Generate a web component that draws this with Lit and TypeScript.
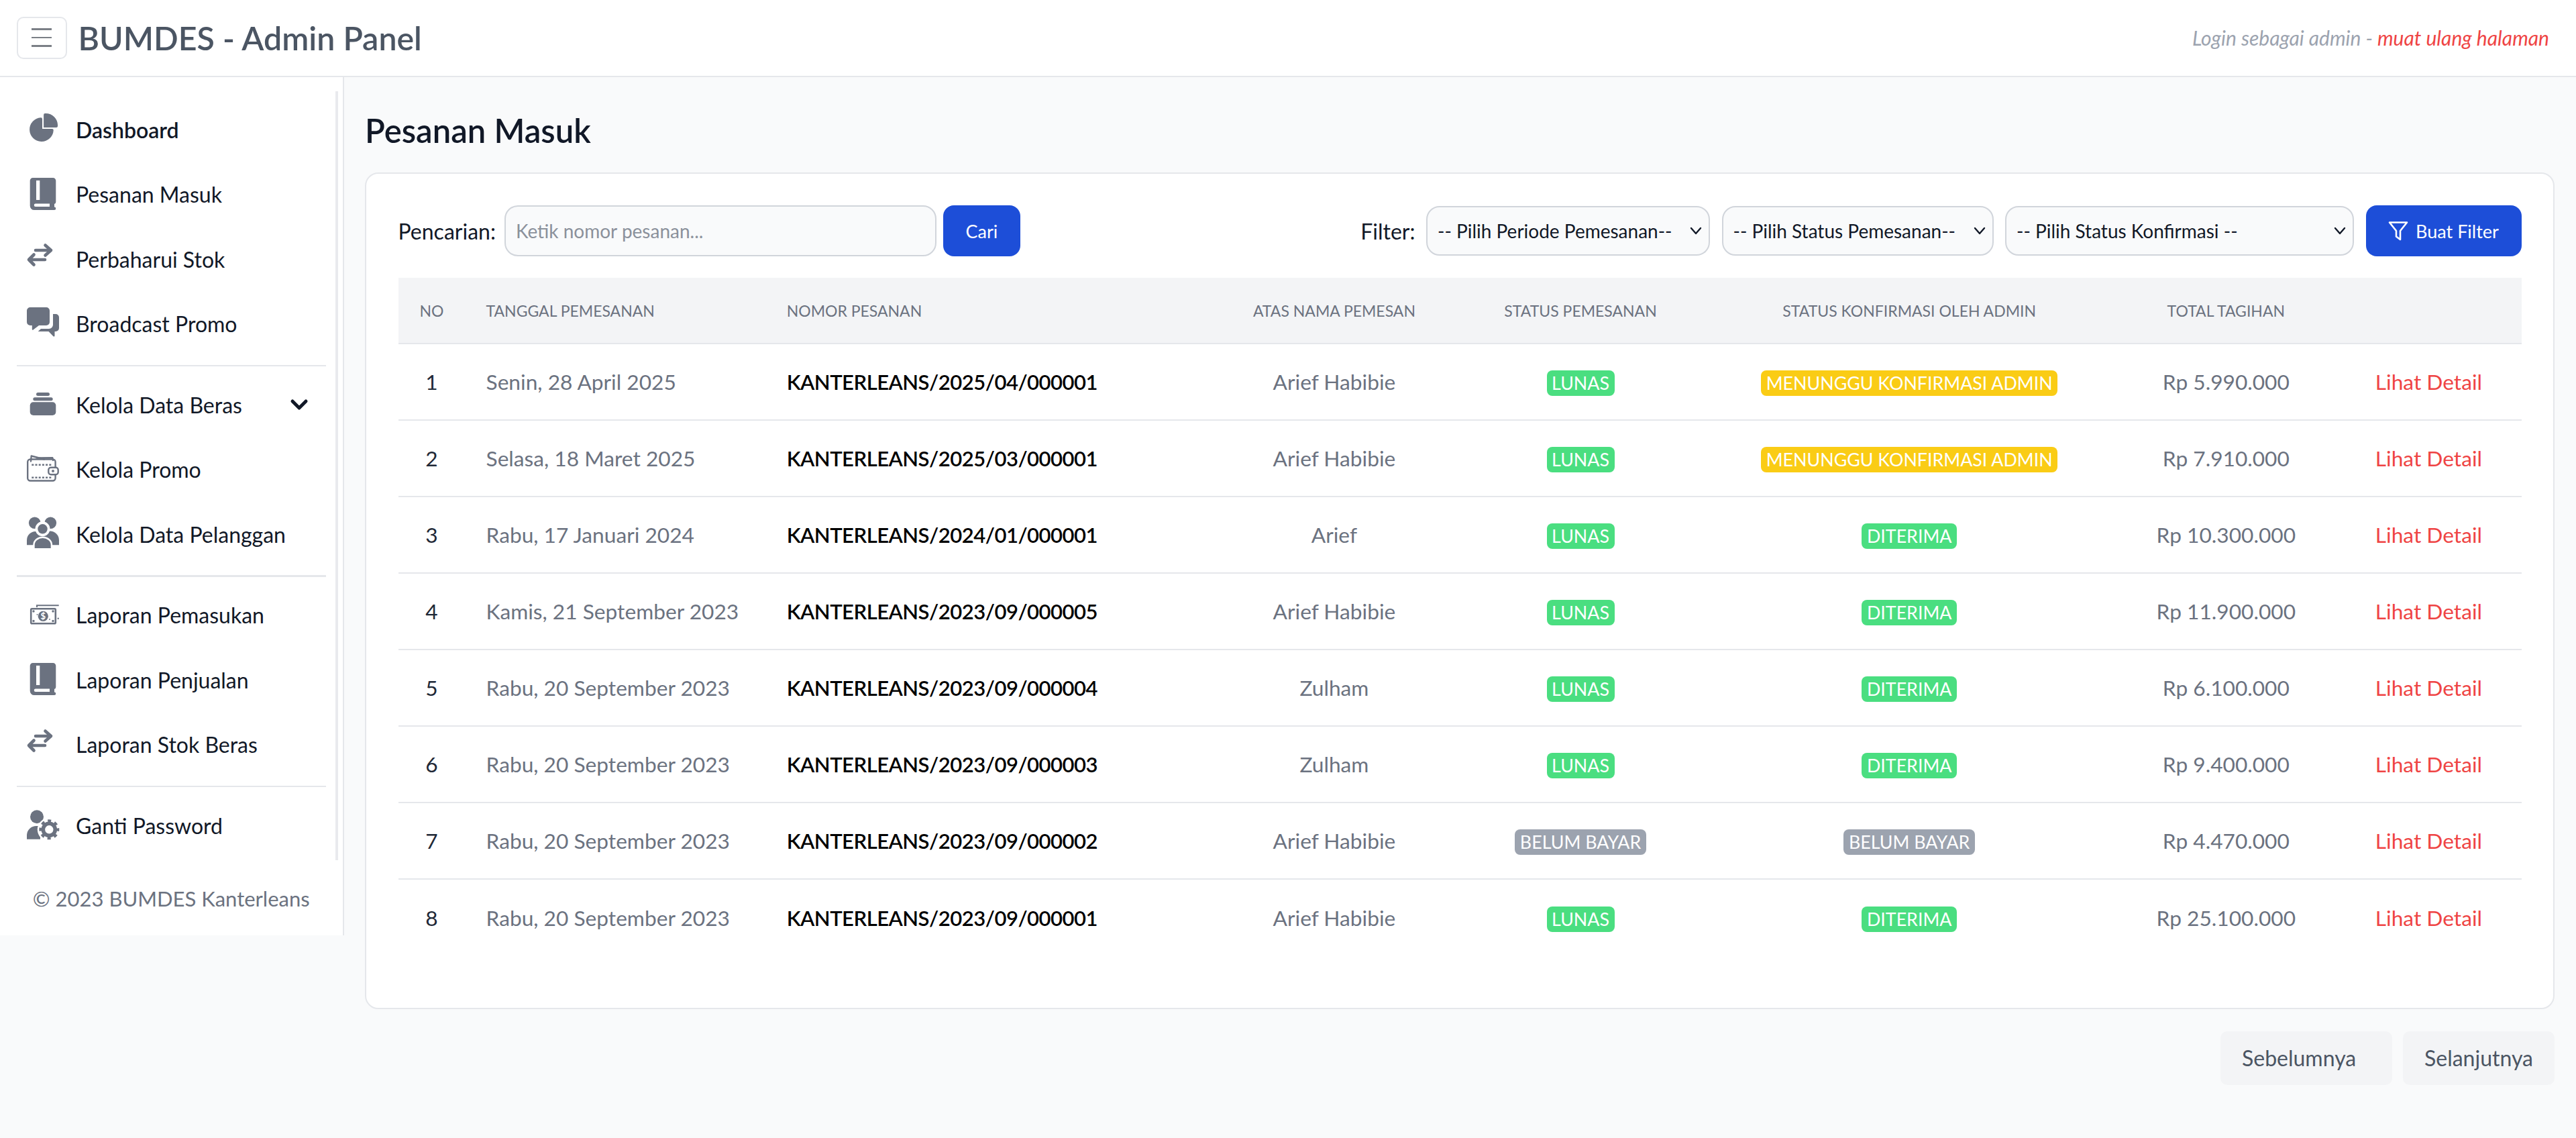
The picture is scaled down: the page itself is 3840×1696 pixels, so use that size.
import { LitElement, html, css } from 'lit'
import { customElement } from 'lit/decorators.js'

const arrows = html`<svg class="ico" viewBox="0 0 60 60" fill="none" stroke="currentColor" stroke-width="4.6" stroke-linecap="round" stroke-linejoin="round"><path d="M19 17H42M33.5 9.5L42 17L33.5 24.5"/><path d="M33 31H9M16.5 23.5L9 31L16.5 38.5"/></svg>`
const book = html`<svg class="ico" viewBox="0 0 60 60" fill="currentColor" fill-rule="evenodd"><path d="M15 5H45a4.3 4.3 0 0 1 4.3 4.3V41a3 3 0 0 1-2.3 2.9V48.5a2.2 2.2 0 0 1 0 4.5H17a6.3 6.3 0 0 1-6.3-6.3V9.3A4.3 4.3 0 0 1 15 5ZM20 9v29h5.3V9ZM19 43.5a2.2 2.2 0 0 0 0 4.5H40V43.5Z"/></svg>`

const icons = {
  pie: html`<svg class="ico" viewBox="0 0 60 60" fill="currentColor"><g transform="translate(8 6) scale(2.1)"><path d="M16.975 11H10V4.025a1 1 0 0 0-1.066-.998 8.5 8.5 0 1 0 9.039 9.039.999.999 0 0 0-1-1.066h.002Z"/><path d="M12.5 0c-.157 0-.311.01-.565.027A1 1 0 0 0 11 1.02V10h8.975a1 1 0 0 0 1-.935c.013-.188.028-.374.028-.565A8.51 8.51 0 0 0 12.5 0Z"/></g></svg>`,
  book,
  arrows,
  chat: html`<svg class="ico" viewBox="0 0 60 60" fill="currentColor"><path d="M11 5H35a5 5 0 0 1 5 5V27a5 5 0 0 1-5 5H24L15.5 38.5a1 1 0 0 1-1.7-.8V32H11a5 5 0 0 1-5-5V10a5 5 0 0 1 5-5Z"/><path d="M45 15h4a5 5 0 0 1 5 5v16a5 5 0 0 1-5 5h-1.5v6.5a1.2 1.2 0 0 1-2 .8L38.5 41H22.7L27 37H39a6 6 0 0 0 6-6Z"/></svg>`,
  stack: html`<svg class="ico" viewBox="0 0 60 60" fill="currentColor"><rect x="20" y="12" width="20" height="5" rx="2.5"/><rect x="15.3" y="19.3" width="29.4" height="5" rx="2.5"/><rect x="10.7" y="26.3" width="38.6" height="19.7" rx="5"/></svg>`,
  wallet: html`<svg class="ico" viewBox="0 0 60 60" fill="none" stroke="currentColor" stroke-width="2.4" stroke-linejoin="round" stroke-linecap="round"><path d="M12 17.5L12.7 9.5L32 14.5"/><path d="M21 12.5L44.3 12.3L45 16"/><rect x="7.2" y="14.5" width="41.4" height="32" rx="4"/><path d="M13.3 22.7H42.7M13.3 41.7H42.7" stroke-dasharray="3 2.2" stroke-linecap="butt"/><rect x="38.3" y="26.7" width="14.4" height="10.6" rx="3.5" fill="#fff"/><circle cx="45" cy="32" r=".8" fill="currentColor"/></svg>`,
  people: html`<svg class="ico" viewBox="0 0 60 60" fill="currentColor"><circle cx="17.7" cy="13.3" r="8.8"/><circle cx="41.3" cy="13.3" r="8.8"/><path d="M6 46.3V39a13 13 0 0 1 26 0v7.3Z"/><path d="M27 46.3V39a13 13 0 0 1 27 0v7.3Z"/><circle cx="29.5" cy="22.3" r="11" fill="#fff"/><path d="M17.7 51V46a12 10 0 0 1 24 0v5Z" fill="#fff" stroke="#fff" stroke-width="5"/><circle cx="29.5" cy="22.3" r="7.2"/><path d="M17.7 51V46a12 10 0 0 1 24 0v5Z"/></svg>`,
  money: html`<svg class="ico" viewBox="0 0 60 60" fill="currentColor"><path d="M21 18V15.2H53.7" fill="none" stroke="currentColor" stroke-width="2"/><rect x="12.2" y="20.2" width="36.6" height="22" rx="1.5" fill="none" stroke="currentColor" stroke-width="2.6"/><circle cx="16" cy="24" r="1.7"/><circle cx="45" cy="24" r="1.7"/><circle cx="16" cy="38.5" r="1.7"/><circle cx="45" cy="38.5" r="1.7"/><circle cx="21.5" cy="29" r=".9"/><circle cx="40" cy="36" r=".9"/><circle cx="52.7" cy="34.7" r="1.2"/><circle cx="30.3" cy="31.3" r="7.6"/><text x="30.3" y="36" text-anchor="middle" font-size="13" font-weight="700" fill="#fff">$</text></svg>`,
  usercog: html`<svg class="ico" viewBox="0 0 60 60" fill="currentColor"><circle cx="21" cy="17.3" r="10"/><path d="M6 50.7V44a14 14 0 0 1 14-13h6v19.7Z"/><circle cx="39.3" cy="36.3" r="17.5" fill="#fff"/><circle cx="39.3" cy="36.3" r="9" fill="none" stroke="currentColor" stroke-width="5.6"/><circle cx="39.3" cy="36.3" r="13" fill="none" stroke="currentColor" stroke-width="4" stroke-dasharray="5 5.21" stroke-dashoffset="2.5"/></svg>`,
}

type Badge = 'lunas' | 'wait' | 'ok' | 'unpaid'
const badges: Record<Badge, { text: string; cls: string }> = {
  lunas: { text: 'LUNAS', cls: 'green' },
  ok: { text: 'DITERIMA', cls: 'green' },
  wait: { text: 'MENUNGGU KONFIRMASI ADMIN', cls: 'yellow' },
  unpaid: { text: 'BELUM BAYAR', cls: 'grey' },
}

const rows: [string, string, string, Badge, Badge, string][] = [
  ['Senin, 28 April 2025', 'KANTERLEANS/2025/04/000001', 'Arief Habibie', 'lunas', 'wait', 'Rp 5.990.000'],
  ['Selasa, 18 Maret 2025', 'KANTERLEANS/2025/03/000001', 'Arief Habibie', 'lunas', 'wait', 'Rp 7.910.000'],
  ['Rabu, 17 Januari 2024', 'KANTERLEANS/2024/01/000001', 'Arief', 'lunas', 'ok', 'Rp 10.300.000'],
  ['Kamis, 21 September 2023', 'KANTERLEANS/2023/09/000005', 'Arief Habibie', 'lunas', 'ok', 'Rp 11.900.000'],
  ['Rabu, 20 September 2023', 'KANTERLEANS/2023/09/000004', 'Zulham', 'lunas', 'ok', 'Rp 6.100.000'],
  ['Rabu, 20 September 2023', 'KANTERLEANS/2023/09/000003', 'Zulham', 'lunas', 'ok', 'Rp 9.400.000'],
  ['Rabu, 20 September 2023', 'KANTERLEANS/2023/09/000002', 'Arief Habibie', 'unpaid', 'unpaid', 'Rp 4.470.000'],
  ['Rabu, 20 September 2023', 'KANTERLEANS/2023/09/000001', 'Arief Habibie', 'lunas', 'ok', 'Rp 25.100.000'],
]

const menu = [
  [
    { label: 'Dashboard', icon: icons.pie, active: true },
    { label: 'Pesanan Masuk', icon: icons.book },
    { label: 'Perbaharui Stok', icon: icons.arrows },
    { label: 'Broadcast Promo', icon: icons.chat },
  ],
  [
    { label: 'Kelola Data Beras', icon: icons.stack, more: true },
    { label: 'Kelola Promo', icon: icons.wallet },
    { label: 'Kelola Data Pelanggan', icon: icons.people },
  ],
  [
    { label: 'Laporan Pemasukan', icon: icons.money },
    { label: 'Laporan Penjualan', icon: icons.book },
    { label: 'Laporan Stok Beras', icon: icons.arrows },
  ],
  [{ label: 'Ganti Password', icon: icons.usercog }],
]

@customElement('app-root')
export class AppRoot extends LitElement {
  static styles = css`
    :host {
      display: block;
      min-height: 1696px;
      background: #f9fafb;
      font-family: Lato, 'Liberation Sans', sans-serif;
      font-size: 32px;
      color: #111827;
    }
    .top {
      height: 115px;
      box-sizing: border-box;
      background: #fff;
      border-bottom: 2.5px solid #e5e7eb;
      display: flex;
      align-items: center;
      padding: 0 40px 0 24.5px;
    }
    .burger {
      width: 75px;
      height: 63px;
      box-sizing: border-box;
      border: 2.5px solid #e5e7eb;
      border-radius: 10px;
      display: flex;
      flex-direction: column;
      justify-content: center;
      align-items: center;
      gap: 10px;
      margin-top: -1px;
    }
    .burger i {
      display: block;
      width: 30px;
      height: 2.5px;
      background: #7b7f86;
    }
    .brand {
      margin: -2px 0 0 17px;
      font-size: 48.3px;
      font-weight: 600;
      color: #4b5563;
    }
    .who {
      margin: -2px 0 0 auto;
      font-size: 30px;
      font-style: italic;
      color: #9ca3af;
    }
    .who a {
      color: #ef4444;
    }
    .page {
      display: flex;
      align-items: flex-start;
    }
    .side {
      width: 512.5px;
      flex: none;
      box-sizing: border-box;
      background: #fff;
      border-right: 2.5px solid #e5e7eb;
      padding-top: 21px;
      height: 1279px;
    }
    .menu {
      width: 504px;
      box-sizing: border-box;
      height: 1146px;
      border-right: 4px solid #e9eaee;
      padding: 9px 14px 0 24.5px;
    }
    .item {
      height: 96.5px;
      display: flex;
      align-items: center;
      gap: 19px;
      padding-left: 9.5px;
      color: #111827;
    }
    .item.active {
      font-weight: 600;
    }
    .ico {
      width: 60px;
      height: 60px;
      flex: none;
      color: #6b7280;
    }
    .item .chev {
      width: 28px;
      height: 18px;
      margin: 0 26px 0 auto;
      color: #111827;
    }
    hr {
      margin: 12.5px 0 9px;
      border: 0;
      height: 2.5px;
      background: #e5e7eb;
    }
    .copy {
      margin-top: 38px;
      text-align: center;
      font-size: 31px;
      color: #6b7280;
    }
    main {
      flex: 1;
      min-width: 0;
      padding: 44px 32px 0 31.5px;
    }
    h1 {
      margin: 0 0 28px;
      font-size: 49px;
      line-height: 70px;
      font-weight: 600;
    }
    .card {
      background: #fff;
      border: 2.5px solid #e5e7eb;
      border-radius: 20px;
      padding: 47px 47.5px 77.5px;
    }
    .tools {
      display: flex;
      align-items: center;
      height: 76px;
      margin-bottom: 32px;
    }
    .tools label {
      margin-right: 13px;
    }
    .search {
      width: 644px;
      height: 76px;
      box-sizing: border-box;
      border: 2.5px solid #d1d5db;
      border-radius: 20px;
      background: #f9fafb;
      padding: 0 15px;
      font: inherit;
      font-size: 28px;
      color: #111827;
    }
    .search::placeholder {
      color: #8b919b;
    }
    .btn {
      height: 76px;
      box-sizing: border-box;
      border: 0;
      border-radius: 16px;
      background: #1d4ed8;
      color: #fff;
      font: inherit;
      font-size: 27px;
      display: flex;
      align-items: center;
      justify-content: center;
      gap: 11px;
    }
    .find {
      width: 115px;
      margin-left: 10px;
    }
    .filters {
      margin-left: auto;
      display: flex;
      align-items: center;
      gap: 17.5px;
    }
    .filters label {
      margin-right: -1px;
    }
    select {
      appearance: none;
      height: 74px;
      box-sizing: border-box;
      border: 2.5px solid #d1d5db;
      border-radius: 20px;
      background: #f9fafb url("data:image/svg+xml,%3Csvg xmlns='http://www.w3.org/2000/svg' width='18' height='12' fill='none' stroke='%23111827' stroke-width='2.4' stroke-linecap='round' stroke-linejoin='round'%3E%3Cpath d='M2 2l7 8 7-8'/%3E%3C/svg%3E") no-repeat right 10px center;
      padding: 0 0 0 15px;
      font: inherit;
      font-size: 28px;
      color: #111827;
    }
    .s1 { width: 423px; }
    .s2 { width: 405px; }
    .s3 { width: 520px; }
    .make {
      width: 232px;
    }
    table {
      width: 100%;
      table-layout: fixed;
      border-collapse: collapse;
    }
    thead tr {
      background: #f3f4f6;
    }
    th {
      box-sizing: border-box;
      height: 98px;
      font-size: 23px;
      font-weight: 400;
      text-transform: uppercase;
      color: #6b7280;
      text-align: center;
      border-bottom: 2.5px solid #e5e7eb;
      padding: 0;
    }
    td {
      box-sizing: border-box;
      height: 114px;
      font-size: 31.7px;
      text-align: center;
      color: #6b7280;
      padding: 0;
      line-height: 40px;
      border-bottom: 2.5px solid #e5e7eb;
    }
    tbody tr:last-child td {
      border-bottom: 0;
    }
    .left {
      text-align: left;
      padding-left: 31px;
    }
    td.no {
      color: #1f2937;
    }
    td.code {
      color: #000;
      font-size: 31px;
      letter-spacing: -0.5px;
      font-weight: 600;
    }
    td.link {
      color: #ef4444;
    }
    .tag {
      display: inline-block;
      padding: 0 7.5px;
      height: 38px;
      line-height: 38px;
      border-radius: 8px;
      font-size: 26.8px;
      color: #fff;
      vertical-align: middle;
    }
    .green { background: #4ade80; }
    .yellow { background: #facc15; }
    .grey { background: #9ca3af; }
    .pager {
      display: flex;
      justify-content: flex-end;
      gap: 16px;
      margin-top: 33px;
    }
    .pager button {
      height: 80px;
      border: 0;
      border-radius: 10px;
      background: #f3f4f6;
      color: #4b5563;
      font: inherit;
      padding: 0 32px;
      text-align: left;
    }
    .prev { width: 256px; }
    .next { width: 226px; }
  `

  render() {
    return html`
      <header class="top">
        <div class="burger"><i></i><i></i><i></i></div>
        <div class="brand">BUMDES - Admin Panel</div>
        <div class="who">Login sebagai admin - <a>muat ulang halaman</a></div>
      </header>
      <div class="page">
        <aside class="side">
          <nav class="menu">
            ${menu.map(
              (group, i) => html`
                ${i > 0 ? html`<hr />` : ''}
                ${group.map(
                  (m: any) => html`
                    <div class="item ${m.active ? 'active' : ''}">
                      ${m.icon}
                      <span>${m.label}</span>
                      ${m.more
                        ? html`<svg class="chev" viewBox="0 0 28 18" fill="none" stroke="currentColor" stroke-width="5" stroke-linecap="round" stroke-linejoin="round"><path d="M4 4L14 14L24 4"/></svg>`
                        : ''}
                    </div>
                  `,
                )}
              `,
            )}
          </nav>
          <div class="copy">© 2023 BUMDES Kanterleans</div>
        </aside>
        <main>
          <h1>Pesanan Masuk</h1>
          <section class="card">
            <div class="tools">
              <label>Pencarian:</label>
              <input class="search" placeholder="Ketik nomor pesanan..." />
              <button class="btn find">Cari</button>
              <div class="filters">
                <label>Filter:</label>
                <select class="s1"><option>-- Pilih Periode Pemesanan--</option></select>
                <select class="s2"><option>-- Pilih Status Pemesanan--</option></select>
                <select class="s3"><option>-- Pilih Status Konfirmasi --</option></select>
                <button class="btn make">
                  <svg width="30" height="30" viewBox="0 0 30 30" fill="none" stroke="currentColor" stroke-width="2.6" stroke-linejoin="round"><path d="M2 2.5H28L18 15V28L12 23.5V15Z"/></svg>
                  Buat Filter
                </button>
              </div>
            </div>
            <table>
              <colgroup>
                <col style="width:100px" /><col style="width:448px" /><col style="width:662px" /><col style="width:370px" /><col style="width:364px" /><col style="width:616px" /><col style="width:328px" /><col style="width:276px" />
              </colgroup>
              <thead>
                <tr>
                  <th>No</th>
                  <th class="left">Tanggal Pemesanan</th>
                  <th class="left">Nomor Pesanan</th>
                  <th>Atas Nama Pemesan</th>
                  <th>Status Pemesanan</th>
                  <th>Status Konfirmasi oleh Admin</th>
                  <th>Total Tagihan</th>
                  <th></th>
                </tr>
              </thead>
              <tbody>
                ${rows.map(
                  (r, i) => html`
                    <tr>
                      <td class="no">${i + 1}</td>
                      <td class="left">${r[0]}</td>
                      <td class="left code">${r[1]}</td>
                      <td>${r[2]}</td>
                      <td><span class="tag ${badges[r[3]].cls}">${badges[r[3]].text}</span></td>
                      <td><span class="tag ${badges[r[4]].cls}">${badges[r[4]].text}</span></td>
                      <td>${r[5]}</td>
                      <td class="link">Lihat Detail</td>
                    </tr>
                  `,
                )}
              </tbody>
            </table>
          </section>
          <div class="pager">
            <button class="prev">Sebelumnya</button>
            <button class="next">Selanjutnya</button>
          </div>
        </main>
      </div>
    `
  }
}
